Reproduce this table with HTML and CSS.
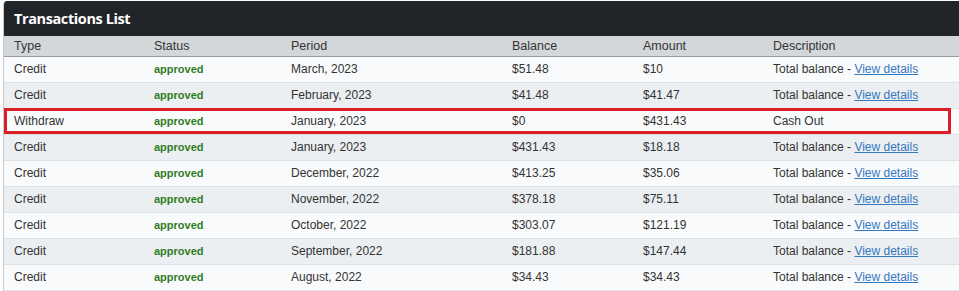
FILE: index.html
```html
<!DOCTYPE html>
<html>
<head>
<meta charset="utf-8">
<link rel="stylesheet" href="styles.css">
</head>
<body>
<div class="panel">
  <div class="title">Transactions List</div>
  <table class="tx">
    <colgroup>
      <col class="c-type"><col class="c-status"><col class="c-period"><col class="c-bal"><col class="c-amt"><col class="c-desc">
    </colgroup>
    <thead>
      <tr><th>Type</th><th>Status</th><th>Period</th><th>Balance</th><th>Amount</th><th>Description</th></tr>
    </thead>
    <tbody>
      <tr><td>Credit</td><td class="ok">approved</td><td>March, 2023</td><td>$51.48</td><td>$10</td><td>Total balance - <a href="#">View details</a></td></tr>
      <tr><td>Credit</td><td class="ok">approved</td><td>February, 2023</td><td>$41.48</td><td>$41.47</td><td>Total balance - <a href="#">View details</a></td></tr>
      <tr><td>Withdraw</td><td class="ok">approved</td><td>January, 2023</td><td>$0</td><td>$431.43</td><td>Cash Out</td></tr>
      <tr><td>Credit</td><td class="ok">approved</td><td>January, 2023</td><td>$431.43</td><td>$18.18</td><td>Total balance - <a href="#">View details</a></td></tr>
      <tr><td>Credit</td><td class="ok">approved</td><td>December, 2022</td><td>$413.25</td><td>$35.06</td><td>Total balance - <a href="#">View details</a></td></tr>
      <tr><td>Credit</td><td class="ok">approved</td><td>November, 2022</td><td>$378.18</td><td>$75.11</td><td>Total balance - <a href="#">View details</a></td></tr>
      <tr><td>Credit</td><td class="ok">approved</td><td>October, 2022</td><td>$303.07</td><td>$121.19</td><td>Total balance - <a href="#">View details</a></td></tr>
      <tr><td>Credit</td><td class="ok">approved</td><td>September, 2022</td><td>$181.88</td><td>$147.44</td><td>Total balance - <a href="#">View details</a></td></tr>
      <tr><td>Credit</td><td class="ok">approved</td><td>August, 2022</td><td>$34.43</td><td>$34.43</td><td>Total balance - <a href="#">View details</a></td></tr>
    </tbody>
  </table>
  <div class="highlight"></div>
</div>
</body>
</html>
```
FILE: styles.css
```css
html, body {
  margin: 0;
  padding: 0;
  background: #ffffff;
}
body {
  font-family: "Liberation Sans", Arial, sans-serif;
  font-size: 12px;
  color: #333333;
}
.panel {
  position: relative;
  margin: 1px 0 0 3px;
  border-left: 1px solid #c8cbce;
  border-top-left-radius: 4px;
  overflow: hidden;
}
.title {
  height: 35px;
  background: #212529;
  color: #ffffff;
  font-family: "Open Sans", "DejaVu Sans", sans-serif;
  font-weight: 700;
  font-size: 14.5px;
  line-height: 35px;
  padding-left: 10px;
  letter-spacing: -0.4px;
}
.tx {
  width: 100%;
  border-collapse: collapse;
  table-layout: fixed;
}
.c-type { width: 140px; }
.c-status { width: 137px; }
.c-period { width: 221px; }
.c-bal { width: 131px; }
.c-amt { width: 130px; }
.tx th {
  background: #d3d7da;
  font-weight: normal;
  text-align: left;
  height: 20px;
  padding: 0 0 0 10px;
  border-bottom: 1px solid #9a9ea2;
  color: #333333;
  font-size: 12.5px;
}
.tx td {
  height: 23px;
  padding: 0 0 2px 10px;
  border-bottom: 1px solid #dde1e4;
  white-space: nowrap;
}
.tx tbody tr:nth-child(odd) td { background: #f9fafb; }
.tx tbody tr:nth-child(even) td { background: #eceff2; }
.tx td.ok {
  color: #2e7d1f;
  font-weight: 700;
  font-size: 11px;
}
.tx a {
  color: #3478c0;
  text-decoration: underline;
}
.highlight {
  position: absolute;
  left: 0;
  top: 107px;
  width: 947px;
  height: 26px;
  border: 3px solid #dc1f27;
  box-sizing: border-box;
}
```
